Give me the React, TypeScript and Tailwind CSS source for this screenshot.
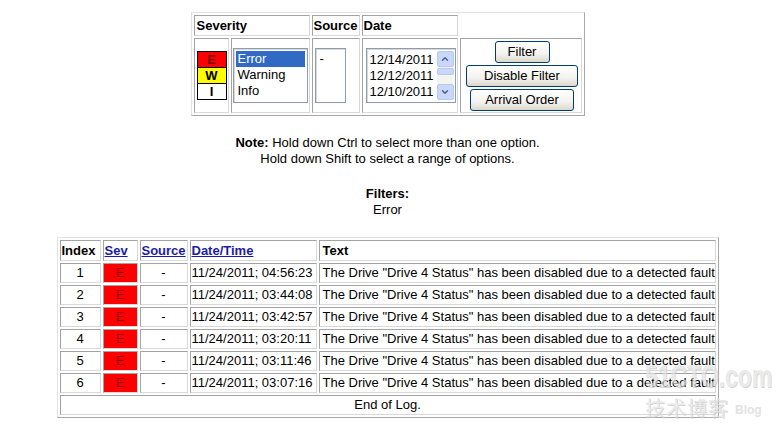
import React from "react";
import { ChevronUp, ChevronDown } from "lucide-react";

// inset cell border, as an old IE table with border=1
const cell =
  "border border-t-[#a3a3a3] border-l-[#a3a3a3] border-b-[#d8d8d8] border-r-[#d8d8d8] p-0";
const tableBorder =
  "border border-t-[#e2e2e2] border-l-[#e2e2e2] border-b-[#a8a8a8] border-r-[#a8a8a8]";
const listBox =
  "border border-[#8e9bb0] shadow-[inset_1px_1px_0_#d9d9d9] bg-white";
const xpButton =
  "h-[22px] rounded-[3px] border border-[#003c74] bg-[linear-gradient(#ffffff,#f3f2ee_60%,#dcd8ce)] text-[13px] leading-none text-black";

const log = [
  { id: 1, time: "11/24/2011; 04:56:23" },
  { id: 2, time: "11/24/2011; 03:44:08" },
  { id: 3, time: "11/24/2011; 03:42:57" },
  { id: 4, time: "11/24/2011; 03:20:11" },
  { id: 5, time: "11/24/2011; 03:11:46" },
  { id: 6, time: "11/24/2011; 03:07:16" },
];

const FilterForm = () => (
  <table className={`${tableBorder} border-separate border-spacing-[2px] table-fixed w-[394px]`}>
    <colgroup>
      <col className="w-[35px]" />
      <col className="w-[79px]" />
      <col className="w-[48px]" />
      <col className="w-[96px]" />
      <col className="w-[122px]" />
    </colgroup>
    <tbody>
      <tr className="h-[21px]">
        <td colSpan={2} className={`${cell} pl-[2px] font-bold`}>
          Severity
        </td>
        <td className={`${cell} pl-[1px] font-bold`}>Source</td>
        <td className={`${cell} pl-[1px] font-bold`}>Date</td>
        {/* empty cell: IE draws no border for it */}
        <td className="p-0"></td>
      </tr>
      <tr className="h-[75px]">
        {/* legend */}
        <td className={`${cell} align-middle`}>
          <div className="ml-[2px] flex w-[30px] flex-col border border-black text-center text-[13px] font-bold leading-[15px]">
            <div className="bg-[#ff0000] text-[#7a0000]">E</div>
            <div className="border-t border-black bg-[#ffff00]">W</div>
            <div className="border-t border-black bg-white">I</div>
          </div>
        </td>
        <td className={`${cell} align-middle`}>
          <div className={`${listBox} ml-[1px] h-[55px] w-[75px] p-[2px]`}>
            <div className="bg-[#316ac5] pl-[2px] leading-4 text-white">Error</div>
            <div className="pl-[2px] leading-4">Warning</div>
            <div className="pl-[2px] leading-4">Info</div>
          </div>
        </td>
        <td className={`${cell} align-middle`}>
          <div className={`${listBox} ml-[2px] h-[55px] w-[31px] p-[2px]`}>
            <div className="pl-[2px] leading-4">-</div>
          </div>
        </td>
        <td className={`${cell} align-middle`}>
          <div className={`${listBox} ml-[3px] flex h-[55px] w-[90px] p-[1px]`}>
            <div className="flex-1 pl-[2px] pt-[2px] leading-4">
              <div>12/14/2011</div>
              <div>12/12/2011</div>
              <div>12/10/2011</div>
            </div>
            <div className="flex w-[17px] flex-col py-[1px]">
              <div className="flex h-[16px] items-center justify-center rounded-[2px] border border-[#b9c9ef] bg-[#c8d7fb]">
                <ChevronUp className="h-[10px] w-[10px] text-[#4d6185]" strokeWidth={3.5} />
              </div>
              <div className="flex flex-1 flex-col bg-[#f4f4f0] pt-[1px]">
                <div className="h-[7px] rounded-[2px] border border-[#b9c9ef] bg-[#c8d7fb]" />
              </div>
              <div className="flex h-[16px] items-center justify-center rounded-[2px] border border-[#b9c9ef] bg-[#c8d7fb]">
                <ChevronDown className="h-[10px] w-[10px] text-[#4d6185]" strokeWidth={3.5} />
              </div>
            </div>
          </div>
        </td>
        <td className={`${cell} align-middle`}>
          <div className="flex flex-col items-center gap-[2px] pl-[3px]">
            <button className={`${xpButton} w-[55px]`}>Filter</button>
            <button className={`${xpButton} w-[112px]`}>Disable Filter</button>
            <button className={`${xpButton} w-[104px]`}>Arrival Order</button>
          </div>
        </td>
      </tr>
    </tbody>
  </table>
);

const LogTable = () => (
  <table className={`${tableBorder} border-separate border-spacing-[2px] table-fixed w-[662px]`}>
    <colgroup>
      <col className="w-[41px]" />
      <col className="w-[35px]" />
      <col className="w-[48px]" />
      <col className="w-[127px]" />
      <col className="w-[397px]" />
    </colgroup>
    <tbody>
      <tr className="h-[21px]">
        <td className={`${cell} pl-[1px] font-bold`}>Index</td>
        <td className={`${cell} pl-[1px] font-bold`}>
          <a href="#" className="text-[#1c1ca8] underline">Sev</a>
        </td>
        <td className={`${cell} pl-[1px] font-bold`}>
          <a href="#" className="text-[#1c1ca8] underline">Source</a>
        </td>
        <td className={`${cell} pl-[1px] font-bold`}>
          <a href="#" className="text-[#1c1ca8] underline">Date/Time</a>
        </td>
        <td className={`${cell} pl-[3px] font-bold`}>Text</td>
      </tr>
      {log.map((row) => (
        <tr key={row.id} className="h-[20px]">
          <td className={`${cell} text-center`}>{row.id}</td>
          <td className={`${cell} bg-[#ff0000] text-center text-[#8a0000]`}>E</td>
          <td className={`${cell} text-center`}>-</td>
          <td className={`${cell} whitespace-nowrap pl-[1px]`}>{row.time}</td>
          <td className={`${cell} whitespace-nowrap pl-[3px]`}>
            The Drive "Drive 4 Status" has been disabled due to a detected fault
          </td>
        </tr>
      ))}
      <tr className="h-[20px]">
        <td colSpan={5} className={`${cell} text-center`}>
          End of Log.
        </td>
      </tr>
    </tbody>
  </table>
);

export default function App() {
  return (
    <div className="relative h-[431px] w-[784px] overflow-hidden bg-white font-['Liberation_Sans',Arial,sans-serif] text-[13px] leading-4 text-black">
      <div className="flex w-[775px] flex-col items-center pt-[12px]">
        <FilterForm />

        <div className="mt-[19px] text-center">
          <div>
            <b>Note:</b> Hold down Ctrl to select more than one option.
          </div>
          <div>Hold down Shift to select a range of options.</div>
        </div>

        <div className="mt-[19px] text-center">
          <div className="font-bold">Filters:</div>
          <div>Error</div>
        </div>

        <div className="mt-[19px]">
          <LogTable />
        </div>
      </div>

      {/* watermark over the log */}
      <div className="pointer-events-none absolute left-[645px] top-[361px] w-[130px] select-none opacity-70">
        <div className="origin-left scale-x-[0.74] whitespace-nowrap text-[31px] font-bold leading-[32px] text-[#e2e2e2] [text-shadow:1px_1px_0_#c4c4c4]">
          51CTO.com
        </div>
        <div className="mt-[4px] flex items-end gap-[6px] font-['Noto_Sans_CJK_SC',sans-serif]">
          <span className="text-[20px] leading-[22px] tracking-[1px] text-[#e2e2e2] [text-shadow:1px_1px_0_#c4c4c4]">
            技术博客
          </span>
          <span className="font-['Liberation_Sans',sans-serif] text-[12px] font-bold leading-[18px] text-[#d6d6d6]">
            Blog
          </span>
        </div>
      </div>
    </div>
  );
}
